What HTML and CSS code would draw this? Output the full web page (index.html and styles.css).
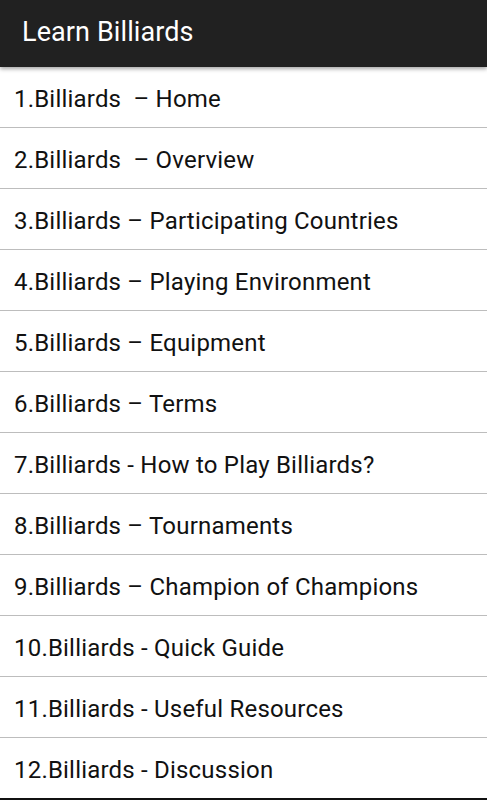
FILE: index.html
```html
<!DOCTYPE html>
<html lang="en">
<head>
<meta charset="UTF-8" />
<meta name="viewport" content="width=device-width, initial-scale=1" />
<title>Learn Billiards</title>
<link rel="stylesheet" href="styles.css">
</head>
<body>

<header class="toolbar">Learn Billiards</header>

<ul class="topics">
  <li>1.Billiards &nbsp;– Home</li>
  <li>2.Billiards &nbsp;– Overview</li>
  <li>3.Billiards – Participating Countries</li>
  <li>4.Billiards – Playing Environment</li>
  <li>5.Billiards – Equipment</li>
  <li>6.Billiards – Terms</li>
  <li>7.Billiards - How to Play Billiards?</li>
  <li>8.Billiards – Tournaments</li>
  <li>9.Billiards – Champion of Champions</li>
  <li>10.Billiards - Quick Guide</li>
  <li>11.Billiards - Useful Resources</li>
  <li>12.Billiards - Discussion</li>
</ul>

</body>
</html>
```

FILE: styles.css
```css
body {
  margin: 0;
  padding: 0;
  background: #fff;
  font-family: Roboto, 'Noto Sans', sans-serif;
  height: 800px;
  overflow: hidden;
}
.toolbar {
  position: relative;
  z-index: 1;
  height: 67px;
  box-sizing: border-box;
  display: flex;
  align-items: center;
  padding: 0 0 3px 22px;
  background: #212121;
  color: #fff;
  font-size: 27px;
  letter-spacing: 0.1px;
  box-shadow: 0 2px 4px rgba(0, 0, 0, 0.35);
}
.topics {
  list-style: none;
  margin: 0;
  padding: 0;
  border-bottom: 2px solid #111;
}
.topics li {
  height: 61px;
  box-sizing: border-box;
  display: flex;
  align-items: center;
  padding: 3px 0 0 14px;
  font-size: 24px;
  letter-spacing: 0.2px;
  color: #111;
  border-bottom: 1px solid #bdbdbd;
}
.topics li:last-child {
  height: 60px;
  border-bottom: none;
}
```
